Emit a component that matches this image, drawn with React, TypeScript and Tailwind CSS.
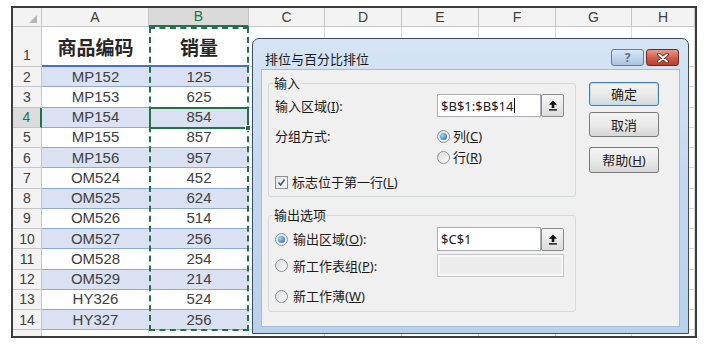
import type { ReactNode } from 'react';

const rows = [
  ['MP152', '125'],
  ['MP153', '625'],
  ['MP154', '854'],
  ['MP155', '857'],
  ['MP156', '957'],
  ['OM524', '452'],
  ['OM525', '624'],
  ['OM526', '514'],
  ['OM527', '256'],
  ['OM528', '254'],
  ['OM529', '214'],
  ['HY326', '524'],
  ['HY327', '256'],
];

const restCols = ['w-[76px]', 'w-[77px]', 'w-[77px]', 'w-[77px]', 'w-[76px]', 'flex-1'];

function EmptyCells() {
  return (
    <>
      {restCols.map((w, i) => (
        <div key={i} className={`${w} border-r border-b border-[#dadada] bg-white`} />
      ))}
    </>
  );
}

function Radio({ on }: { on?: boolean }) {
  return (
    <span className="flex h-[13px] w-[13px] shrink-0 items-center justify-center rounded-full border border-[#8a9096] bg-linear-to-br from-[#dcdcdc] to-[#fafafa]">
      {on && (
        <span className="h-[7px] w-[7px] rounded-full bg-[radial-gradient(circle_at_35%_35%,#9ad8ff,#1c5ca6)]" />
      )}
    </span>
  );
}

function Checkbox() {
  return (
    <span className="flex h-[13px] w-[13px] shrink-0 items-center justify-center border border-[#8e8f8f] bg-linear-to-br from-[#e4e4e4] to-[#fbfbfb]">
      <svg width="9" height="9" viewBox="0 0 9 9">
        <path d="M1.5 4.5 L3.6 7 L7.6 1.5" fill="none" stroke="#3d5a96" strokeWidth="1.6" />
      </svg>
    </span>
  );
}

function PickButton() {
  return (
    <span className="flex h-[23px] w-[23px] shrink-0 items-center justify-center rounded-[2px] border border-[#8a8a8a] bg-linear-to-b from-[#f6f6f6] to-[#dcdcdc]">
      <svg width="10" height="11" viewBox="0 0 10 11">
        <path d="M5 0.5 L9 4.8 L6.3 4.8 L6.3 8 L3.7 8 L3.7 4.8 L1 4.8 Z" fill="#111" />
        <rect x="1" y="9.2" width="8" height="1.4" fill="#111" />
      </svg>
    </span>
  );
}

function Btn({ children, primary, h }: { children: ReactNode; primary?: boolean; h: string }) {
  return (
    <div
      className={`${h} flex w-[70px] items-center justify-center rounded-[3px] border bg-linear-to-b from-[#f3f3f3] via-[#ebebeb] to-[#d6d6d6] text-[13px] leading-[16px] text-[#1a1a1a] ${
        primary ? 'border-[#3c7fb1] shadow-[inset_0_0_0_1px_#b9e0f7]' : 'border-[#7a7a7a]'
      }`}
    >
      {children}
    </div>
  );
}

function Dialog() {
  return (
    <div className="absolute left-[239px] top-[30px] flex h-[296px] w-[437px] flex-col rounded-t-[7px] border border-[#3b4b5c] bg-linear-to-b from-[#d6e5f5] via-[#c2d8ef] to-[#b8d1ec] font-['Noto_Sans','Noto_Sans_CJK_SC',sans-serif] text-[13px] leading-[16px] text-[#1a1a1a]">
      {/* title bar */}
      <div className="flex h-[30px] shrink-0 items-start justify-between">
        <div className="pl-[12px] pt-[12px] text-[#1b1b1b]">排位与百分比排位</div>
        <div className="flex gap-[2px] pr-[9px] pt-[10px]">
          <div className="flex h-[17px] w-[33px] items-center justify-center rounded-[3px] border border-[#5f7d9e] bg-linear-to-b from-[#dbe8f6] to-[#a9c3e1] text-[12px] font-bold leading-none text-[#5c6f86]">
            ?
          </div>
          <div className="flex h-[17px] w-[33px] items-center justify-center rounded-[3px] border border-[#6e2a20] bg-linear-to-b from-[#e59a8a] via-[#d0604c] to-[#b8402c]">
            <svg width="12" height="10" viewBox="0 0 12 10">
              <path d="M2 1.5 L10 8.5 M10 1.5 L2 8.5" stroke="#5a2018" strokeWidth="3.6" strokeLinecap="round" />
              <path d="M2 1.5 L10 8.5 M10 1.5 L2 8.5" stroke="#ffffff" strokeWidth="2" strokeLinecap="round" />
            </svg>
          </div>
        </div>
      </div>

      {/* body */}
      <div className="mx-[8px] mb-[6px] flex flex-1 border border-[#a6bcd4] bg-[#f0f0f0]">
        <div className="ml-[6px] flex w-[308px] flex-col">
          <fieldset className="mt-[5px] rounded-[3px] border border-[#d3d9df] pb-[4px] pl-[6px]">
            <legend className="-ml-[2px] px-[1px] leading-[16px]">输入</legend>
            <div className="mt-[3px] flex h-[23px] items-center">
              <span className="w-[162px]">
                输入区域(<u>I</u>):
              </span>
              <span className="flex h-[23px] w-[104px] items-center border border-[#abadb3] bg-white pl-[3px]">
                $B$1:$B$14<span className="ml-[1px] h-[15px] w-px bg-black" />
              </span>
              <PickButton />
            </div>
            <div className="mt-[9px] flex h-[20px] items-center">
              <span className="w-[162px]">分组方式:</span>
              <Radio on />
              <span className="ml-[3px]">
                列(<u>C</u>)
              </span>
            </div>
            <div className="mt-[1px] flex h-[20px] items-center">
              <span className="w-[162px]" />
              <Radio />
              <span className="ml-[3px]">
                行(<u>R</u>)
              </span>
            </div>
            <div className="mt-[5px] flex h-[20px] items-center">
              <Checkbox />
              <span className="ml-[4px]">
                标志位于第一行(<u>L</u>)
              </span>
            </div>
          </fieldset>

          <fieldset className="mt-[10px] rounded-[3px] border border-[#d3d9df] pb-[5px] pl-[6px]">
            <legend className="-ml-[2px] px-[1px] leading-[16px]">输出选项</legend>
            <div className="mt-[4px] flex h-[24px] items-center">
              <span className="flex w-[162px] items-center">
                <Radio on />
                <span className="ml-[5px]">
                  输出区域(<u>O</u>):
                </span>
              </span>
              <span className="flex h-[24px] w-[104px] items-center border border-[#abadb3] bg-white pl-[3px]">$C$1</span>
              <PickButton />
            </div>
            <div className="mt-[3px] flex h-[23px] items-center">
              <span className="flex w-[162px] items-center">
                <Radio />
                <span className="ml-[5px]">
                  新工作表组(<u>P</u>):
                </span>
              </span>
              <span className="h-[23px] w-[127px] border border-[#c2c4c7] bg-[#ececec] shadow-[inset_0_0_0_2px_#f7f7f7]" />
            </div>
            <div className="mt-[9px] flex h-[20px] items-center">
              <Radio />
              <span className="ml-[5px]">
                新工作薄(<u>W</u>)
              </span>
            </div>
          </fieldset>
        </div>

        <div className="ml-[13px] flex flex-col pt-[12px]">
          <Btn primary h="h-[24px]">
            确定
          </Btn>
          <div className="mt-[6px]">
            <Btn h="h-[25px]">取消</Btn>
          </div>
          <div className="mt-[10px]">
            <Btn h="h-[26px]">
              帮助(<u>H</u>)
            </Btn>
          </div>
        </div>
      </div>
    </div>
  );
}

export default function App() {
  return (
    <div className="h-[346px] w-[704px] bg-white pl-[11px] pt-[6px]">
      <div className="relative h-[332px] w-[686px] overflow-hidden border-2 border-[#3d3d3d] bg-white font-['Liberation_Sans','Noto_Sans_CJK_SC',sans-serif] text-[#404040]">
        {/* column header */}
        <div className="flex h-[19px]">
          <div className="relative w-[29px] border-r border-b border-[#c6c6c6] bg-[#f3f3f3]">
            <div className="absolute bottom-[3px] right-[4px] h-0 w-0 border-b-[8px] border-l-[8px] border-b-[#b5b5b5] border-l-transparent" />
          </div>
          <div className="flex w-[107px] items-center justify-center border-r border-b border-[#c6c6c6] bg-[#f3f3f3] text-[14px]">A</div>
          <div className="flex w-[100px] items-center justify-center border-r border-b-2 border-r-[#c6c6c6] border-b-[#217346] bg-[#dadada] text-[14px] text-[#217346]">
            B
          </div>
          {['C', 'D', 'E', 'F', 'G', 'H'].map((c, i) => (
            <div
              key={c}
              className={`${restCols[i]} flex items-center justify-center border-r border-b border-[#c6c6c6] bg-[#f3f3f3] text-[14px]`}
            >
              {c}
            </div>
          ))}
        </div>

        {/* row 1 */}
        <div className="flex h-[40px]">
          <div className="flex w-[29px] items-end justify-center border-r border-b border-[#c6c6c6] bg-[#f3f3f3] pb-[3px] text-[14px] leading-[16px]">1</div>
          <div className="flex w-[107px] items-center justify-center border-b-2 border-[#4472c4] pt-[2px] font-['Noto_Sans_CJK_SC',sans-serif] text-[19px] font-bold text-[#262626]">
            商品编码
          </div>
          <div className="flex w-[100px] items-center justify-center border-b-2 border-[#4472c4] pt-[2px] font-['Noto_Sans_CJK_SC',sans-serif] text-[19px] font-bold text-[#262626]">
            销量
          </div>
          <EmptyCells />
        </div>

        {/* data rows */}
        {rows.map(([code, qty], i) => {
          const n = i + 2;
          const band = i % 2 === 0 ? 'bg-[#d9e1f2]' : 'bg-white';
          const sel = n === 4;
          return (
            <div key={n} className="flex h-[20.25px] text-[15px] leading-[18px]">
              <div
                className={`flex w-[29px] items-center justify-center border-b border-[#c6c6c6] text-[14px] ${
                  sel ? 'border-r-2 border-r-[#217346] bg-[#dcdcdc] text-[#217346]' : 'border-r bg-[#f3f3f3]'
                }`}
              >
                {n}
              </div>
              <div className={`flex w-[107px] items-center justify-center border-b border-[#8eaadb] ${band}`}>{code}</div>
              <div className={`flex w-[100px] items-center justify-center border-b border-[#8eaadb] ${band}`}>{qty}</div>
              <EmptyCells />
            </div>
          );
        })}

        {/* row 15, cut off */}
        <div className="flex h-[20px]">
          <div className="w-[29px] border-r border-[#c6c6c6] bg-[#f3f3f3]" />
          <div className="w-[107px] border-r border-[#e2e2e2]" />
          <div className="w-[100px] border-r border-[#e2e2e2]" />
          {restCols.map((w, i) => (
            <div key={i} className={`${w} border-r border-[#dadada]`} />
          ))}
        </div>

        {/* copy range B1:B14 */}
        <div className="pointer-events-none absolute left-[136px] top-[19px] h-[304px] w-[100px] border-2 border-dashed border-[#217346]" />
        {/* active cell B4 */}
        <div className="pointer-events-none absolute left-[136px] top-[99px] h-[22px] w-[100px] border-2 border-[#217346]">
          <div className="absolute -bottom-[4px] -right-[4px] h-[6px] w-[6px] border border-white bg-[#217346]" />
        </div>

        <Dialog />
      </div>
    </div>
  );
}
